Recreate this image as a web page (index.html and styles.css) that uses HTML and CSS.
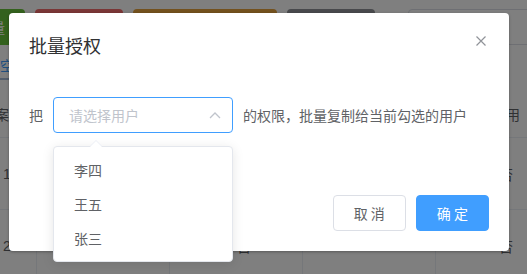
FILE: index.html
```html
<!DOCTYPE html>
<html lang="zh-CN">
<head>
    <meta charset="UTF-8">
    <meta name="viewport" content="width=device-width, initial-scale=1.0">
    <title>批量授权</title>
    <link rel="stylesheet" href="styles.css">
</head>
<body>
    <!-- 底层页面（大部分被弹窗挡住） -->
    <div class="page">
        <div class="toolbar">
            <button class="btn btn-success">批量</button>
            <button class="btn btn-danger btn-w88"></button>
            <button class="btn btn-warning btn-w144"></button>
            <button class="btn btn-info btn-w88"></button>
            <div class="search"></div>
        </div>

        <div class="tabs">
            <span class="tab active">空间</span>
        </div>

        <table class="grid">
            <colgroup>
                <col style="width: 36px">
                <col style="width: 133px">
                <col style="width: 133px">
                <col style="width: 133px">
                <col style="width: 142px">
            </colgroup>
            <tr>
                <th class="first"><span class="shift">档案</span></th>
                <th></th>
                <th></th>
                <th></th>
                <th>启用</th>
            </tr>
            <tr>
                <td class="first">1</td>
                <td></td>
                <td></td>
                <td></td>
                <td>否</td>
            </tr>
            <tr>
                <td class="first">2</td>
                <td></td>
                <td class="offset">否</td>
                <td></td>
                <td>否</td>
            </tr>
        </table>
    </div>

    <!-- 遮罩 -->
    <div class="mask"></div>

    <!-- 批量授权弹窗 -->
    <div class="dialog">
        <div class="dialog-header">
            <span class="dialog-title">批量授权</span>
            <span class="dialog-close">
                <svg width="10" height="10" viewBox="0 0 10 10">
                    <path d="M0.5 0.5 L9.5 9.5 M9.5 0.5 L0.5 9.5" stroke="#909399" stroke-width="1.2" fill="none"/>
                </svg>
            </span>
        </div>
        <div class="dialog-body">
            <div class="form-line">
                <span>把</span>
                <div class="select">
                    <span class="placeholder">请选择用户</span>
                    <svg width="12" height="7" viewBox="0 0 12 7">
                        <polyline points="1,6 6,1 11,6" stroke="#c0c4cc" stroke-width="1.3" fill="none"/>
                    </svg>
                </div>
                <span>的权限，批量复制给当前勾选的用户</span>
            </div>
        </div>
        <div class="dialog-footer">
            <button class="btn-plain">取 消</button>
            <button class="btn-primary">确 定</button>
        </div>
    </div>

    <!-- 下拉选项 -->
    <div class="dropdown">
        <div class="dropdown-arrow"></div>
        <div class="dropdown-item">李四</div>
        <div class="dropdown-item">王五</div>
        <div class="dropdown-item">张三</div>
    </div>
</body>
</html>
```

FILE: styles.css
```css
body {
    margin: 0;
    width: 527px;
    height: 274px;
    overflow: hidden;
    position: relative;
    background: #fff;
    font-family: "Liberation Sans", "Noto Sans CJK SC", sans-serif;
    font-size: 14px;
    color: #606266;
}
button {
    font-family: inherit;
}

/* 底层页面 */
.toolbar {
    display: flex;
    gap: 10px;
    padding-top: 9px;
    margin-left: -43px;
}
.btn {
    height: 36px;
    width: 68px;
    border: none;
    border-radius: 4px;
    color: #fff;
    font-size: 14px;
    flex-shrink: 0;
}
.btn-w88 { width: 88px; }
.btn-w144 { width: 144px; }
.btn-success { background: #67c23a; }
.btn-danger { background: #f56c6c; }
.btn-warning { background: #e6a23c; }
.btn-info { background: #909399; }
.search {
    flex-shrink: 0;
    width: 200px;
    height: 34px;
    margin-left: 23px;
    border: 1px solid #dcdfe6;
    border-radius: 4px;
}

.tabs {
    height: 36px;
    padding-top: 9px;
}
.tab {
    display: inline-block;
    height: 24px;
    line-height: 24px;
    padding-right: 6px;
    border-bottom: 2px solid #a8bcd8;
    color: #409eff;
}

.grid {
    border-collapse: collapse;
    table-layout: fixed;
    width: 577px;
}
.grid th, .grid td {
    border-bottom: 1px solid #ebeef5;
    border-right: 1px solid #ebeef5;
    text-align: center;
    white-space: nowrap;
    overflow: hidden;
    padding: 0;
}
.grid th {
    height: 47px;
    font-weight: normal;
    color: #606266;
}
.grid td {
    height: 71px;
}
.grid .first {
    text-align: left;
    padding-left: 3px;
}
.grid .shift {
    display: inline-block;
    margin-left: -22px;
}
.grid .offset {
    padding-left: 17px;
}

.mask {
    position: absolute;
    inset: 0;
    background: rgba(0, 0, 0, 0.5);
}

/* 弹窗 */
.dialog {
    position: absolute;
    left: 9px;
    top: 13px;
    width: 500px;
    background: #fff;
    border-radius: 4px;
    box-shadow: 0 1px 3px rgba(0, 0, 0, 0.3);
    font-family: "Noto Sans CJK SC", sans-serif;
}
.dialog-header {
    display: flex;
    justify-content: space-between;
    padding: 20px 20px 10px;
}
.dialog-title {
    font-size: 18px;
    line-height: 24px;
    color: #303133;
}
.dialog-close {
    width: 16px;
    height: 16px;
    display: flex;
    align-items: center;
    justify-content: center;
}
.dialog-body {
    padding: 30px 20px;
}
.form-line {
    display: flex;
    align-items: center;
    gap: 10px;
    height: 36px;
    margin-bottom: 22px;
}
.select {
    box-sizing: border-box;
    width: 180px;
    height: 36px;
    border: 1px solid #409eff;
    border-radius: 4px;
    padding: 0 11px 0 15px;
    display: flex;
    align-items: center;
    justify-content: space-between;
}
.placeholder {
    color: #c0c4cc;
}
.dialog-footer {
    display: flex;
    justify-content: flex-end;
    gap: 10px;
    padding: 10px 20px 20px;
}
.btn-plain, .btn-primary {
    height: 36px;
    padding: 0 20px;
    font-size: 14px;
    border-radius: 4px;
    font-family: "Noto Sans CJK SC", sans-serif;
}
.btn-plain {
    background: #fff;
    border: 1px solid #dcdfe6;
    color: #606266;
}
.btn-primary {
    background: #409eff;
    border: 1px solid #409eff;
    color: #fff;
}

/* 下拉 */
.dropdown {
    position: absolute;
    left: 53px;
    top: 146px;
    box-sizing: border-box;
    width: 180px;
    padding: 6px 0;
    background: #fff;
    border: 1px solid #e4e7ed;
    border-radius: 4px;
    box-shadow: 0 2px 12px rgba(0, 0, 0, 0.1);
    font-family: "Noto Sans CJK SC", sans-serif;
}
.dropdown-arrow {
    position: absolute;
    top: -7px;
    left: 36px;
    width: 0;
    height: 0;
    border-left: 6px solid transparent;
    border-right: 6px solid transparent;
    border-bottom: 6px solid #ebeef5;
}
.dropdown-arrow::after {
    content: "";
    position: absolute;
    left: -6px;
    top: 1px;
    border-left: 6px solid transparent;
    border-right: 6px solid transparent;
    border-bottom: 6px solid #fff;
}
.dropdown-item {
    height: 34px;
    line-height: 34px;
    padding: 0 20px;
    color: #606266;
}
```
